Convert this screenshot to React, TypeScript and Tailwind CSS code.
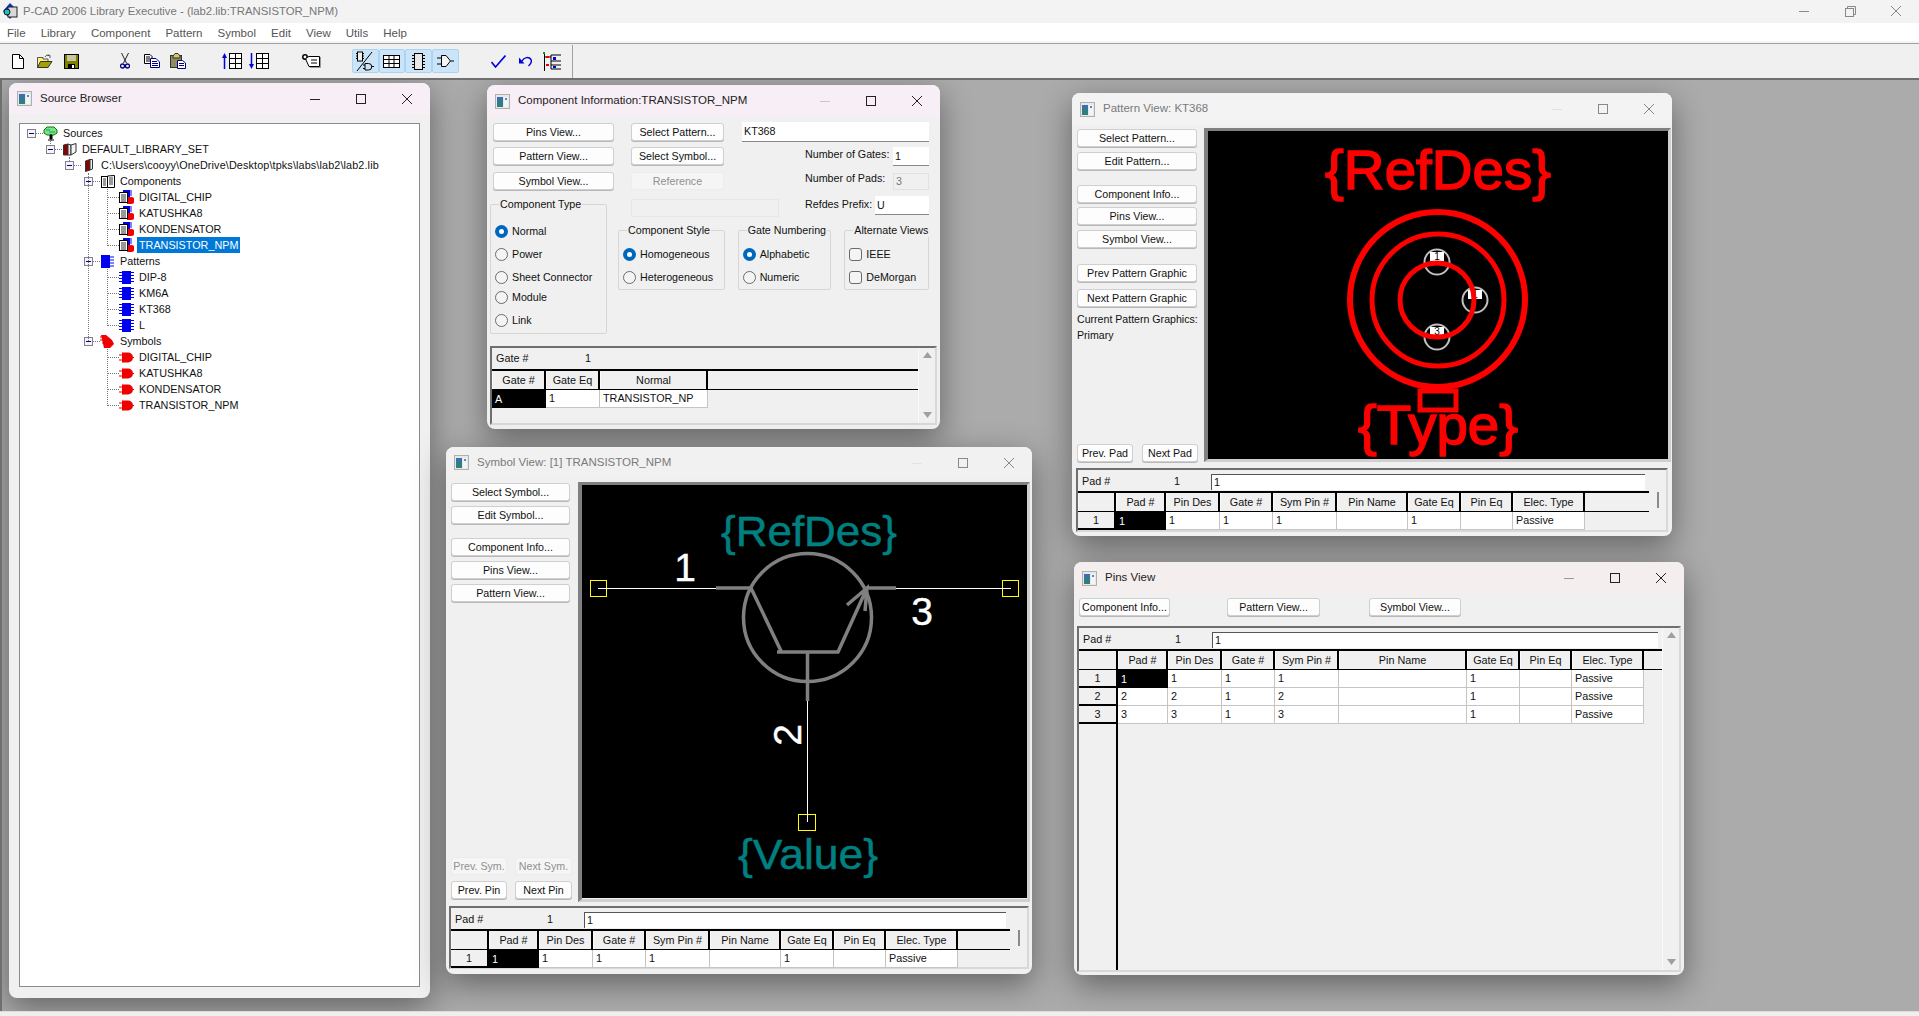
import React from "react";

type Col = { t: string; w: string };

function WinIcon() {
  return (
    <svg width="15" height="15" viewBox="0 0 15 15" className="shrink-0">
      <rect x="0.5" y="0.5" width="14" height="14" fill="#e8e8e8" stroke="#b0b0b0" />
      <rect x="2" y="3" width="6" height="10" fill="#2f7f7f" />
      <rect x="2" y="3" width="6" height="4" fill="#3a6fb0" />
      <rect x="9" y="3" width="4" height="10" fill="#f4f4f4" />
      <rect x="10" y="4" width="2" height="2" fill="#4a90c0" />
    </svg>
  );
}

function WinControls({ color, minColor }: { color: string; minColor: string }) {
  return (
    <div className="flex shrink-0">
      <div className="w-[46px] flex items-center justify-center">
        <svg width="10" height="10" viewBox="0 0 10 10"><path d="M0 5.5H10" stroke={minColor} /></svg>
      </div>
      <div className="w-[46px] flex items-center justify-center">
        <svg width="10" height="10" viewBox="0 0 10 10"><rect x="0.5" y="0.5" width="9" height="9" fill="none" stroke={color} /></svg>
      </div>
      <div className="w-[46px] flex items-center justify-center">
        <svg width="10" height="10" viewBox="0 0 10 10"><path d="M0 0L10 10M10 0L0 10" stroke={color} /></svg>
      </div>
    </div>
  );
}

function Win({ pos, title, bar, text, ctl, min, h, children }: { pos: string; title: string; bar: string; text: string; ctl: string; min: string; h: string; children: React.ReactNode }) {
  return (
    <div className={`absolute ${pos} rounded-[8px] bg-[#f0f0f0] flex flex-col overflow-hidden shadow-[0_10px_32px_rgba(0,0,0,0.42)]`}>
      <div className={`${h} ${bar} shrink-0 flex items-center pl-2`}>
        <WinIcon />
        <div className={`ml-[8px] flex-1 text-[11.5px] ${text}`}>{title}</div>
        <WinControls color={ctl} minColor={min} />
      </div>
      {children}
    </div>
  );
}

function Btn({ children, cls = "w-full", off = false }: { children: React.ReactNode; cls?: string; off?: boolean }) {
  return (
    <div className={`h-[18px] shrink-0 rounded-[3px] flex items-center justify-center text-[10.7px] leading-none ${cls} ${off ? "bg-[#f5f5f5] border border-[#ececec] text-[#909090]" : "bg-[#fdfdfd] border border-[#cfcfcf] text-[#111] shadow-[0_1px_0_#b8b8b8]"}`}>
      {children}
    </div>
  );
}

function Radio({ on, label, cls }: { on?: boolean; label: string; cls: string }) {
  return (
    <div className={`flex items-center h-[16px] text-[10.7px] text-[#111] ${cls}`}>
      {on ? (
        <span className="w-[13px] h-[13px] rounded-full bg-[#0067c0] flex items-center justify-center shrink-0">
          <span className="w-[5px] h-[5px] rounded-full bg-white" />
        </span>
      ) : (
        <span className="w-[13px] h-[13px] rounded-full border border-[#6b6b6b] bg-[#f4f4f4] shrink-0" />
      )}
      <span className="ml-[4px]">{label}</span>
    </div>
  );
}

function Check({ label, cls }: { label: string; cls: string }) {
  return (
    <div className={`flex items-center h-[16px] text-[10.7px] text-[#111] ${cls}`}>
      <span className="w-[13px] h-[13px] rounded-[3px] border border-[#6b6b6b] bg-[#f4f4f4] shrink-0" />
      <span className="ml-[4px]">{label}</span>
    </div>
  );
}

function Group({ label, cls, children }: { label: string; cls: string; children: React.ReactNode }) {
  return (
    <div className={`relative border border-[#d6d6d6] rounded-[2px] ${cls}`}>
      <div className="absolute -top-[8px] left-[8px] bg-[#f0f0f0] px-px text-[10.7px] leading-[14px] text-[#111] whitespace-nowrap">{label}</div>
      {children}
    </div>
  );
}

function Tri({ up }: { up?: boolean }) {
  return (
    <svg width="9" height="7" viewBox="0 0 9 7">
      <path d={up ? "M4.5 0L9 6H0Z" : "M0 0H9L4.5 6Z"} fill="#a0a0a0" />
    </svg>
  );
}

function PadTop() {
  return (
    <div className="h-[21px] pt-[2px] flex items-center text-[10.8px] text-[#111] shrink-0">
      <div className="w-[96px] pl-1">Pad #</div>
      <div className="w-[37px]">1</div>
      <div className="flex-1 mr-[4px] h-[16px] bg-white border-l border-t border-[#555] pl-[2px] flex items-center">1</div>
    </div>
  );
}

function Sheet({ cls, top, cols, rows, rowHead, scroll, extend }: { cls: string; top: React.ReactNode; cols: Col[]; rows: string[][]; rowHead: boolean; scroll: "thumb" | "arrows"; extend?: string }) {
  return (
    <div className={`flex border-2 border-[#6f6f6f] border-r-[#d8d8d8] border-b-[#d8d8d8] bg-[#f0f0f0] text-[10.8px] text-[#111] ${cls}`}>
      <div className="flex-1 min-w-0 flex flex-col">
        {top}
        <div className="flex h-[21px] border-t-2 border-b border-black shrink-0">
          {cols.map((c, i) => (
            <div key={i} className={`${c.w} shrink-0 flex items-center justify-center border-r-2 border-black border-l border-l-[#fafafa]`}>{c.t}</div>
          ))}
          <div className="flex-1" />
        </div>
        {rows.map((r, i) => (
          <div key={i} className="flex h-[18px] shrink-0">
            {r.map((v, j) => {
              const head = rowHead && j === 0;
              const sel = i === 0 && j === (rowHead ? 1 : 0);
              const tone = head
                ? "bg-[#f0f0f0] border-r-2 border-b-2 border-black justify-center"
                : sel
                ? "bg-black text-white pl-[3px]"
                : "bg-white border-r border-b border-[#c4c4c4] pl-[3px]";
              return <div key={j} className={`${cols[j].w} shrink-0 flex items-center ${tone}`}>{v}</div>;
            })}
          </div>
        ))}
        {extend && <div className={`flex-1 ${extend} border-r-2 border-black`} />}
      </div>
      {scroll === "arrows" ? (
        <div className="w-[17px] shrink-0 border-l border-[#fafafa] flex flex-col items-center justify-between py-[4px]">
          <Tri up />
          <Tri />
        </div>
      ) : (
        <div className="w-[17px] shrink-0 flex items-center justify-center">
          <div className="w-[2px] h-[16px] bg-[#8a8a8a]" />
        </div>
      )}
    </div>
  );
}

const padCols: Col[] = [
  { t: "", w: "w-[38px]" },
  { t: "Pad #", w: "w-[50px]" },
  { t: "Pin Des", w: "w-[54px]" },
  { t: "Gate #", w: "w-[53px]" },
  { t: "Sym Pin #", w: "w-[64px]" },
  { t: "Pin Name", w: "w-[71px]" },
  { t: "Gate Eq", w: "w-[53px]" },
  { t: "Pin Eq", w: "w-[52px]" },
  { t: "Elec. Type", w: "w-[72px]" },
];
const pinCols: Col[] = padCols.map((c) =>
  c.t === "Pin Name" ? { t: c.t, w: "w-[128px]" } : c.t === "" ? { t: c.t, w: "w-[39px]" } : c
);
const gateCols: Col[] = [
  { t: "Gate #", w: "w-[54px]" },
  { t: "Gate Eq", w: "w-[54px]" },
  { t: "Normal", w: "w-[108px]" },
];

/* tree icons */
function CompIcon() {
  return (
    <svg width="15" height="15" viewBox="0 0 15 15" className="shrink-0">
      <path d="M4 0H11V9H4Z" fill="#0000e0" />
      <path d="M11 1H13M11 3H13M11 5H13" stroke="#0000e0" />
      <path d="M8 7H12A3.5 3.5 0 0 1 12 14H8Z" fill="#f00000" />
      <rect x="0.5" y="2.5" width="8" height="10" fill="#fff" stroke="#000" />
      <path d="M2 5H7M2 7H7M2 9H7M2 11H7" stroke="#333" />
    </svg>
  );
}
function PatIcon({ big }: { big?: boolean }) {
  return (
    <svg width="15" height="15" viewBox="0 0 15 15" className="shrink-0">
      <rect x={big ? 1 : 3} y="1" width="9" height="13" fill="#0000f0" />
      <path d={big ? "M10 3H14M10 6H14M10 9H14M10 12H14" : "M0 2.5H15M0 5.5H15M0 8.5H15M0 11.5H15"} stroke="#0000f0" />
    </svg>
  );
}
function SymIcon({ big }: { big?: boolean }) {
  return (
    <svg width="15" height="15" viewBox="0 0 15 15" className="shrink-0">
      {big ? (
        <>
          <path d="M1 1H6L12 6L14 10L10 14H4Z" fill="#f00000" />
          <path d="M0 3H3M0 6H4M2 9H5" stroke="#f00000" />
        </>
      ) : (
        <>
          <path d="M3 2.5H9A5 5 0 0 1 9 12.5H3Z" fill="#f00000" />
          <path d="M0 5H4M0 10H4M13 7.5H15" stroke="#f00000" />
        </>
      )}
    </svg>
  );
}
function SrcIcon() {
  return (
    <svg width="15" height="15" viewBox="0 0 15 15" className="shrink-0">
      <path d="M1 4L4 1H11L14 4V7L11 9H4L1 7Z" fill="#7fe07f" stroke="#008000" />
      <path d="M3 4H7M6 6H12" stroke="#00a0a0" />
      <path d="M7 9H9V13H7ZM5 14H11" fill="#000" stroke="#000" />
    </svg>
  );
}
function SetIcon() {
  return (
    <svg width="14" height="13" viewBox="0 0 14 13" className="shrink-0">
      <path d="M0.5 2L5 1V12L0.5 12Z" fill="#8b0000" stroke="#333" />
      <path d="M5 1L8 2V12L5 12Z" fill="#e8e8e8" stroke="#333" />
      <path d="M8 2L13 0.5V9L8 12Z" fill="#f4f4f4" stroke="#333" />
    </svg>
  );
}
function LibIcon() {
  return (
    <svg width="8" height="13" viewBox="0 0 8 13" className="shrink-0">
      <path d="M0.5 2L5 0.5V11L0.5 12.5Z" fill="#8b0000" stroke="#333" />
      <path d="M5 0.5H7.5V10L5 11Z" fill="#eee" stroke="#333" />
    </svg>
  );
}
function BooksIcon() {
  return (
    <svg width="14" height="13" viewBox="0 0 14 13" className="shrink-0">
      <rect x="0.5" y="1.5" width="6" height="11" fill="#fff" stroke="#000" />
      <path d="M6.5 1L13.5 0.5V12.5H6.5Z" fill="#fff" stroke="#000" />
      <path d="M2 4H5M2 6H5M2 8H5M2 10H5M8 3H12M8 5H12M8 7H12M8 9H12" stroke="#333" />
    </svg>
  );
}

const lvl = ["pl-[7px]", "pl-[26px]", "pl-[45px]", "pl-[64px]", "pl-[83px]"];

function Row({ l, icon, text, selected, exp = true, cls = "" }: { l: number; icon: React.ReactNode; text: string; selected?: boolean; exp?: boolean; cls?: string }) {
  return (
    <div className={`h-4 flex items-center text-[10.8px] leading-none text-[#111] ${lvl[l]}`}>
      {exp ? (
        <span className="w-[9px] h-[9px] shrink-0 border border-[#808090] bg-[#f4f4f4] flex items-center justify-center">
          <span className="w-[5px] h-px bg-[#000080]" />
        </span>
      ) : (
        <span className="w-[5px] shrink-0" />
      )}
      <span className={`${exp ? "w-[7px]" : "w-[11px]"} shrink-0 border-t border-dotted border-[#777]`} />
      <span className="w-[15px] shrink-0 flex items-center justify-center">{icon}</span>
      <span className={selected ? "ml-[3px] pl-[2px] pr-[2px] h-4 flex items-center bg-[#0078d7] text-white" : `ml-[5px] whitespace-nowrap ${cls}`}>{text}</span>
    </div>
  );
}

function VLine({ cls }: { cls: string }) {
  return <div className={`absolute w-0 border-l border-dotted border-[#777] ${cls}`} />;
}

/* toolbar icons */
const Slot = ({ children, on }: { children: React.ReactNode; on?: boolean }) => (
  <div className={`w-[26.7px] h-[24px] shrink-0 flex items-center justify-center rounded-[2px] ${on ? "bg-[#cce4f7] border border-[#a8d4f5]" : ""}`}>{children}</div>
);
const Gap = () => <div className="w-[26.7px] shrink-0" />;

function Grid3({ x = 0 }: { x?: number }) {
  return (
    <g transform={`translate(${x} 0)`} fill="none" stroke="#000">
      <rect x="0.5" y="0.5" width="12" height="15" fill="#fff" />
      <path d="M6.5 0V16M0 5.5H13M0 10.5H13" />
    </g>
  );
}

function Toolbar() {
  return (
    <div className="h-[34px] bg-[#f0f0f0] flex items-center pl-[5px] shrink-0">
      <Slot>
        <svg width="12" height="15" viewBox="0 0 12 15"><path d="M0.5 0.5H7.5L11.5 4.5V14.5H0.5Z" fill="#fff" stroke="#000" /><path d="M7.5 .5V4.5H11.5" fill="none" stroke="#000" /></svg>
      </Slot>
      <Slot>
        <svg width="16" height="14" viewBox="0 0 16 14"><path d="M0.5 3.5H6V5H11V13.5H0.5Z" fill="#fff27a" stroke="#555" /><path d="M0.5 13.5L3.5 7.5H15L11 13.5Z" fill="#a8a000" stroke="#333" /><path d="M8 3C9 1 11 0.5 13 1.5M13 1.5V4M13 1.5H10.5" fill="none" stroke="#555" /></svg>
      </Slot>
      <Slot>
        <svg width="15" height="15" viewBox="0 0 15 15"><rect x="0.5" y="0.5" width="14" height="14" fill="#808000" stroke="#000" /><rect x="3" y="1" width="9" height="6" fill="#c8c8a0" /><rect x="4" y="10" width="7" height="5" fill="#000" /><rect x="8" y="11" width="2" height="3" fill="#fff" /></svg>
      </Slot>
      <Gap />
      <Slot>
        <svg width="10" height="16" viewBox="0 0 10 16"><path d="M1.5 0L6.5 10M8.5 0L3.5 10" stroke="#222" fill="none" /><circle cx="2.5" cy="13" r="2" fill="none" stroke="#000080" strokeWidth="1.3" /><circle cx="7.5" cy="13" r="2" fill="none" stroke="#000080" strokeWidth="1.3" /></svg>
      </Slot>
      <Slot>
        <svg width="16" height="14" viewBox="0 0 16 14"><path d="M0.5 0.5H6L8 2.5V9.5H0.5Z" fill="#fff" stroke="#000" /><path d="M2 3H6M2 5H6M2 7H6" stroke="#000" /><path d="M6.5 4.5H12L15.5 8V13.5H6.5Z" fill="#fff" stroke="#000080" /><path d="M8 7.5H13M8 9.5H14M8 11.5H14" stroke="#000080" /></svg>
      </Slot>
      <Slot>
        <svg width="16" height="16" viewBox="0 0 16 16"><rect x="0.5" y="2.5" width="11" height="12" fill="#8f8a60" stroke="#333" /><path d="M3 3L5 .5H8L10 3V5H3Z" fill="#d8c860" stroke="#333" /><path d="M7.5 7.5H12.5L15.5 10V15.5H7.5Z" fill="#fff" stroke="#000080" /><path d="M9 10.5H14M9 12.5H14" stroke="#000080" /></svg>
      </Slot>
      <Gap />
      <Slot>
        <svg width="20" height="16" viewBox="0 0 20 16"><path d="M2.5 16V3" stroke="#0000e0" strokeWidth="1.5" /><path d="M2.5 0L5 5H0Z" fill="#0000e0" /><Grid3 x={7} /></svg>
      </Slot>
      <Slot>
        <svg width="20" height="16" viewBox="0 0 20 16"><path d="M2.5 0V13" stroke="#0000e0" strokeWidth="1.5" /><path d="M2.5 16L5 11H0Z" fill="#0000e0" /><Grid3 x={7} /></svg>
      </Slot>
      <Gap />
      <Slot>
        <svg width="19" height="14" viewBox="0 0 19 14"><circle cx="3" cy="3" r="2.2" fill="#fff" stroke="#000" strokeWidth="1.5" /><path d="M4 4L7 2.5H17.5V12.5H7L4 6Z" fill="#fff" stroke="#000" /><path d="M9 6H15M9 9H15" stroke="#000" /><path d="M18.5 3V13.5H8" fill="none" stroke="#999" /></svg>
      </Slot>
      <Gap />
      <Slot on>
        <svg width="19" height="21" viewBox="0 0 19 21"><rect x="1.5" y="1" width="5" height="9" fill="#eee" stroke="#000" /><path d="M0 2.5H1.5M0 5H1.5M0 7.5H1.5M6.5 2.5H8M6.5 5H8M6.5 7.5H8" stroke="#000" /><path d="M1 20L16 1" stroke="#000" /><path d="M9 12.5H12.5A3 3 0 0 1 12.5 19H9ZM7 14H9M7 17.5H9M15.5 15.5H18" fill="none" stroke="#000" /></svg>
      </Slot>
      <Slot on>
        <svg width="17" height="13" viewBox="0 0 17 13"><rect x="0.5" y="0.5" width="16" height="12" fill="#fff" stroke="#000" /><path d="M6 0V13M11 0V13M0 4.5H17M0 8.5H17" stroke="#000" /></svg>
      </Slot>
      <Slot on>
        <svg width="13" height="17" viewBox="0 0 13 17"><rect x="2.5" y="0.5" width="8" height="16" fill="#e8e8e8" stroke="#000" /><path d="M0 2.5H3M0 5.5H3M0 8.5H3M0 11.5H3M0 14.5H3M10 2.5H13M10 5.5H13M10 8.5H13M10 11.5H13M10 14.5H13" stroke="#000" /></svg>
      </Slot>
      <Slot on>
        <svg width="17" height="12" viewBox="0 0 17 12"><path d="M4.5 .5H9L13.5 6L9 11.5H4.5Z" fill="#f4f4f4" stroke="#000" /><path d="M0 3H4.5M0 9H4.5M13.5 6H17" stroke="#000" /></svg>
      </Slot>
      <Gap />
      <Slot>
        <svg width="15" height="13" viewBox="0 0 15 13"><path d="M0.5 7L4.5 12L14.5 0.5" fill="none" stroke="#0000e0" strokeWidth="1.6" /></svg>
      </Slot>
      <Slot>
        <svg width="13" height="11" viewBox="0 0 13 11"><path d="M3 5C5 1 10 .5 12 3.5C13 6 12 8 9.5 10" fill="none" stroke="#0000e0" strokeWidth="1.4" /><path d="M0 1.5L5.5 7.5H0Z" fill="#0000e0" /></svg>
      </Slot>
      <Slot>
        <svg width="18" height="19" viewBox="0 0 18 19"><path d="M1.5 0V19" stroke="#000" /><path d="M1.5 5H8M8 3V17M8 3H18M8 9H18M8 13H18M8 17H18" fill="none" stroke="#000" /><rect x="0" y="0" width="2" height="2" fill="#00a000" /><rect x="3" y="4" width="3" height="2" fill="#f00000" /><rect x="3" y="12" width="3" height="2" fill="#f00000" /><rect x="10" y="5" width="3" height="3" fill="#0000e0" /><rect x="10" y="14" width="3" height="2" fill="#0000e0" /></svg>
      </Slot>
      <div className="ml-[7px] h-[33px] w-px bg-[#a0a0a0]" />
    </div>
  );
}

const redText = { fill: "#ff0000", stroke: "#ff0000", strokeWidth: 1.6 };
const tealText = { fill: "#008080", stroke: "#008080", strokeWidth: 0.5 };
const whiteText = { fill: "#ffffff", stroke: "#ffffff", strokeWidth: 0.4 };

function PatternCanvas() {
  const pad = (cx: number, cy: number, n: string) => (
    <g key={n + cx}>
      <circle cx={cx} cy={cy} r="12.5" fill="none" stroke="#c0c0c0" strokeWidth="2" />
      <rect x={cx - 7} y={cy - 10} width="14" height="9" fill="#fff" />
      <text x={cx} y={cy - 2} fontSize="10" textAnchor="middle" fill="#000">{n}</text>
    </g>
  );
  return (
    <svg viewBox="1208 132 460 328" className="block w-[460px] h-[328px] bg-black">
      {pad(1437, 263, "1")}
      {pad(1475, 301, "1")}
      {pad(1437, 338, "3")}
      <g fill="none" stroke="#ff0000">
        <circle cx="1437.5" cy="300.5" r="87.5" strokeWidth="6" />
        <circle cx="1438" cy="301" r="66" strokeWidth="5" />
        <circle cx="1437" cy="301" r="37" strokeWidth="5" />
        <rect x="1420" y="392" width="36" height="19" strokeWidth="5" />
      </g>
      <text x="1438" y="190" fontSize="56" textAnchor="middle" textLength="226" lengthAdjust="spacingAndGlyphs" {...redText}>{"{RefDes}"}</text>
      <text x="1438" y="445" fontSize="56" textAnchor="middle" textLength="160" lengthAdjust="spacingAndGlyphs" {...redText}>{"{Type}"}</text>
    </svg>
  );
}

function SymbolCanvas() {
  return (
    <svg viewBox="582 486 445 413" className="block w-[445px] h-[413px] bg-black">
      <g fill="none" stroke="#ffff00">
        <rect x="590.5" y="581.5" width="16" height="16" />
        <rect x="1002.5" y="581.5" width="16" height="16" />
        <rect x="798.5" y="815.5" width="17" height="16" />
      </g>
      <path d="M598 589.5H716M896 589.5H1011M807.5 702V823" stroke="#fff" fill="none" />
      <g fill="none" stroke="#808080" strokeWidth="3.5">
        <circle cx="807.5" cy="618.5" r="64" />
        <path d="M716 589H751L781.5 653M777 653H838L867 589H896M847 606L867 589L865 612M807.5 653V702" />
      </g>
      <text x="685" y="582" fontSize="39" textAnchor="middle" {...whiteText}>1</text>
      <text x="922" y="626" fontSize="39" textAnchor="middle" {...whiteText}>3</text>
      <text transform="translate(801 736) rotate(-90)" fontSize="39" textAnchor="middle" {...whiteText}>2</text>
      <text x="809" y="547" fontSize="42" textAnchor="middle" textLength="176" lengthAdjust="spacingAndGlyphs" {...tealText}>{"{RefDes}"}</text>
      <text x="808" y="870" fontSize="42" textAnchor="middle" textLength="140" lengthAdjust="spacingAndGlyphs" {...tealText}>{"{Value}"}</text>
    </svg>
  );
}

export default function App() {
  return (
    <div className="w-[1919px] h-[1016px] flex flex-col overflow-hidden bg-[#f0f0f0] font-['Liberation_Sans',sans-serif]">
      {/* app title */}
      <div className="h-[23px] bg-[#f3f3f3] flex items-center shrink-0 pl-[2px]">
        <svg width="17" height="17" viewBox="0 0 17 17" className="shrink-0">
          <path d="M8 0L15 7L8 16L1 8Z" fill="#1030c0" />
          <rect x="6" y="4" width="9" height="10" fill="#d8d8d8" stroke="#222" />
          <circle cx="5" cy="9" r="3" fill="#20c0c0" stroke="#111" />
        </svg>
        <div className="ml-[4px] flex-1 text-[11.35px] text-[#777]">P-CAD 2006 Library Executive - (lab2.lib:TRANSISTOR_NPM)</div>
        <div className="flex">
          <div className="w-[46px] flex justify-center"><svg width="10" height="10" viewBox="0 0 10 10"><path d="M0 5.5H10" stroke="#888" /></svg></div>
          <div className="w-[46px] flex justify-center"><svg width="11" height="11" viewBox="0 0 11 11"><rect x="0.5" y="2.5" width="8" height="8" fill="none" stroke="#888" /><path d="M2.5 2.5V0.5H10.5V8.5H8.5" fill="none" stroke="#888" /></svg></div>
          <div className="w-[46px] flex justify-center"><svg width="10" height="10" viewBox="0 0 10 10"><path d="M0 0L10 10M10 0L0 10" stroke="#888" /></svg></div>
        </div>
      </div>
      {/* menu */}
      <div className="h-[20px] pt-[3px] bg-white flex items-center gap-[15.1px] pl-[7px] text-[11.5px] text-[#555] shrink-0 border-b-2 border-[#f5f5f5]">
        {["File", "Library", "Component", "Pattern", "Symbol", "Edit", "View", "Utils", "Help"].map((m) => (
          <span key={m}>{m}</span>
        ))}
      </div>
      <div className="h-px bg-[#a0a0a0] shrink-0" />
      <Toolbar />
      {/* MDI area */}
      <div className="relative flex-1 bg-[#ababab] border-t-2 border-[#6f6f6f] border-l-2 border-l-[#6f6f6f] overflow-hidden">
        {/* Source Browser */}
        <Win pos="left-[7px] top-[3px] w-[421px] h-[915px]" title="Source Browser" bar="bg-[#f8eef6]" text="text-[#222]" ctl="#222" min="#222" h="h-[31px]">
          <div className="relative mx-[10px] mt-[9px] h-[864px] border border-[#8a8a90] bg-white pt-px">
            <VLine cls="left-[30px] top-[17px] h-[5px]" />
            <VLine cls="left-[49px] top-[33px] h-[4px]" />
            <VLine cls="left-[68px] top-[49px] h-[168px]" />
            <VLine cls="left-[87px] top-[65px] h-[57px]" />
            <VLine cls="left-[87px] top-[145px] h-[57px]" />
            <VLine cls="left-[87px] top-[225px] h-[57px]" />
            <Row l={0} icon={<SrcIcon />} text="Sources" />
            <Row l={1} icon={<SetIcon />} text="DEFAULT_LIBRARY_SET" />
            <Row l={2} icon={<LibIcon />} text="C:\Users\cooyy\OneDrive\Desktop\tpks\labs\lab2\lab2.lib" cls="tracking-[0.13px]" />
            <Row l={3} icon={<BooksIcon />} text="Components" />
            <Row l={4} exp={false} icon={<CompIcon />} text="DIGITAL_CHIP" />
            <Row l={4} exp={false} icon={<CompIcon />} text="KATUSHKA8" />
            <Row l={4} exp={false} icon={<CompIcon />} text="KONDENSATOR" />
            <Row l={4} exp={false} icon={<CompIcon />} text="TRANSISTOR_NPM" selected />
            <Row l={3} icon={<PatIcon big />} text="Patterns" />
            <Row l={4} exp={false} icon={<PatIcon />} text="DIP-8" />
            <Row l={4} exp={false} icon={<PatIcon />} text="KM6A" />
            <Row l={4} exp={false} icon={<PatIcon />} text="KT368" />
            <Row l={4} exp={false} icon={<PatIcon />} text="L" />
            <Row l={3} icon={<SymIcon big />} text="Symbols" />
            <Row l={4} exp={false} icon={<SymIcon />} text="DIGITAL_CHIP" />
            <Row l={4} exp={false} icon={<SymIcon />} text="KATUSHKA8" />
            <Row l={4} exp={false} icon={<SymIcon />} text="KONDENSATOR" />
            <Row l={4} exp={false} icon={<SymIcon />} text="TRANSISTOR_NPM" />
          </div>
        </Win>

        {/* Component Information */}
        <Win pos="left-[485px] top-[5px] w-[453px] h-[344px]" title="Component Information:TRANSISTOR_NPM" bar="bg-[#f8eef6]" text="text-[#222]" ctl="#222" min="#c8c8c8" h="h-[32px]">
          <div className="flex-1 flex pl-[3px] pt-[6px] min-h-0">
            <div className="w-[128px] shrink-0 flex flex-col">
              <Btn cls="ml-[3px] w-[121px]">Pins View...</Btn>
              <Btn cls="ml-[3px] mt-[6px] w-[121px]">Pattern View...</Btn>
              <Btn cls="ml-[3px] mt-[7px] w-[121px]">Symbol View...</Btn>
              <Group label="Component Type" cls="mt-[14px] w-[117px] h-[130px] pl-[4px]">
                <Radio on label="Normal" cls="mt-[18px]" />
                <Radio label="Power" cls="mt-[7px]" />
                <Radio label="Sheet Connector" cls="mt-[7px]" />
                <Radio label="Module" cls="mt-[4px]" />
                <Radio label="Link" cls="mt-[7px]" />
              </Group>
            </div>
            <div className="w-[311px] shrink-0 flex flex-col">
              <div className="flex h-[107px]">
                <div className="ml-[13px] w-[111px] shrink-0 flex flex-col">
                  <Btn cls="w-[93px]">Select Pattern...</Btn>
                  <Btn cls="mt-[6px] w-[93px]">Select Symbol...</Btn>
                  <Btn cls="mt-[7px] w-[93px]" off>Reference</Btn>
                  <div className="mt-[9px] h-[18px] w-[148px] border border-[#e6e6e6]" />
                </div>
                <div className="w-[187px] shrink-0 flex flex-col -mt-px text-[10.7px] text-[#111]">
                  <div className="h-[20px] bg-white border-b border-[#888] pl-[2px] flex items-center">KT368</div>
                  <div className="mt-[5px] h-[19px] flex items-center pl-[63px]">
                    <span className="w-[88px] whitespace-nowrap -translate-y-[2px]">Number of Gates:</span>
                    <span className="w-[36px] h-[19px] bg-white border-b border-[#888] pl-[2px] flex items-center">1</span>
                  </div>
                  <div className="mt-[7px] h-[17px] flex items-center pl-[63px]">
                    <span className="w-[88px] whitespace-nowrap -translate-y-[3px]">Number of Pads:</span>
                    <span className="w-[36px] h-[17px] bg-[#f0f0f0] border border-[#e2e2e2] pl-[2px] flex items-center text-[#777]">3</span>
                  </div>
                  <div className="mt-[6px] h-[19px] flex items-center pl-[63px]">
                    <span className="w-[70px] whitespace-nowrap -translate-y-px">Refdes Prefix:</span>
                    <span className="w-[54px] h-[19px] bg-white border-b border-[#888] pl-[2px] flex items-center">U</span>
                  </div>
                </div>
              </div>
              <div className="flex gap-[13px]">
                <Group label="Component Style" cls="w-[107px] h-[60px] pl-[4px]">
                  <Radio on label="Homogeneous" cls="mt-[15px]" />
                  <Radio label="Heterogeneous" cls="mt-[7px]" />
                </Group>
                <Group label="Gate Numbering" cls="w-[94px] h-[60px] pl-[4px]">
                  <Radio on label="Alphabetic" cls="mt-[15px]" />
                  <Radio label="Numeric" cls="mt-[7px]" />
                </Group>
                <Group label="Alternate Views" cls="w-[85px] h-[60px] pl-[4px]">
                  <Check label="IEEE" cls="mt-[15px]" />
                  <Check label="DeMorgan" cls="mt-[7px]" />
                </Group>
              </div>
            </div>
          </div>
          <Sheet
            cls="mx-[3px] mb-[4px] h-[79px] shrink-0"
            rowHead={false}
            scroll="arrows"
            cols={gateCols}
            rows={[["A", "1", "TRANSISTOR_NP"]]}
            top={
              <div className="h-[21px] flex items-center shrink-0">
                <div className="w-[93px] pl-[4px]">Gate #</div>
                <div>1</div>
              </div>
            }
          />
        </Win>

        {/* Pattern View */}
        <Win pos="left-[1070px] top-[13px] w-[600px] h-[443px]" title="Pattern View: KT368" bar="bg-[#f3f3f3]" text="text-[#7a7a7a]" ctl="#888" min="#e2e2e2" h="h-[32px]">
          <div className="flex pl-[5px] pt-[3px] h-[340px] shrink-0">
            <div className="w-[127px] shrink-0 flex flex-col h-[336px] text-[10.6px] text-[#111]">
              <Btn cls="mt-[1px] w-[120px]">Select Pattern...</Btn>
              <Btn cls="mt-[5px] w-[120px]">Edit Pattern...</Btn>
              <Btn cls="mt-[15px] w-[120px]">Component Info...</Btn>
              <Btn cls="mt-[4px] w-[120px]">Pins View...</Btn>
              <Btn cls="mt-[5px] w-[120px]">Symbol View...</Btn>
              <Btn cls="mt-[16px] w-[120px]">Prev Pattern Graphic</Btn>
              <Btn cls="mt-[7px] w-[120px]">Next Pattern Graphic</Btn>
              <div className="mt-[4px] leading-[16px] whitespace-nowrap">Current Pattern Graphics:</div>
              <div className="leading-[16px]">Primary</div>
              <div className="mt-auto flex mb-[2px]">
                <Btn cls="w-[56px]">Prev. Pad</Btn>
                <Btn cls="ml-[9px] w-[56px]">Next Pad</Btn>
              </div>
            </div>
            <div className="h-[334px] border-[3px] border-l-[4px] border-[#808080] border-r-[#d0d0d0] border-b-[#d0d0d0]">
              <PatternCanvas />
            </div>
          </div>
          <Sheet cls="mx-[4px] mt-[3px] h-[64px] shrink-0" rowHead scroll="thumb" cols={padCols} rows={[["1", "1", "1", "1", "1", "", "1", "", "Passive"]]} top={<PadTop />} />
        </Win>

        {/* Symbol View */}
        <Win pos="left-[444px] top-[367px] w-[586px] h-[527px]" title="Symbol View: [1] TRANSISTOR_NPM" bar="bg-[#f1f1f1]" text="text-[#7a7a7a]" ctl="#888" min="#e2e2e2" h="h-[31px]">
          <div className="flex pl-[5px] pt-[4px] h-[424px] shrink-0">
            <div className="w-[127px] shrink-0 flex flex-col h-[420px]">
              <Btn cls="mt-[1px] w-[119px]">Select Symbol...</Btn>
              <Btn cls="mt-[5px] w-[119px]">Edit Symbol...</Btn>
              <Btn cls="mt-[14px] w-[119px]">Component Info...</Btn>
              <Btn cls="mt-[5px] w-[119px]">Pins View...</Btn>
              <Btn cls="mt-[5px] w-[119px]">Pattern View...</Btn>
              <div className="mt-auto flex">
                <Btn cls="w-[56px]" off>Prev. Sym.</Btn>
                <Btn cls="ml-[8px] w-[57px]" off>Next Sym.</Btn>
              </div>
              <div className="mt-[6px] mb-[3px] flex">
                <Btn cls="w-[56px]">Prev. Pin</Btn>
                <Btn cls="ml-[8px] w-[57px]">Next Pin</Btn>
              </div>
            </div>
            <div className="h-[420px] border-[3px] border-l-[4px] border-[#808080] border-r-[#d0d0d0] border-b-[#d0d0d0]">
              <SymbolCanvas />
            </div>
          </div>
          <Sheet cls="mx-[3px] mt-[4px] h-[63px] shrink-0" rowHead scroll="thumb" cols={padCols} rows={[["1", "1", "1", "1", "1", "", "1", "", "Passive"]]} top={<PadTop />} />
        </Win>

        {/* Pins View */}
        <Win pos="left-[1072px] top-[482px] w-[610px] h-[413px]" title="Pins View" bar="bg-[#f5eeee]" text="text-[#222]" ctl="#222" min="#999" h="h-[32px]">
          <div className="flex pl-[5px] mt-[4px] shrink-0">
            <Btn cls="w-[91px]">Component Info...</Btn>
            <Btn cls="ml-[57px] w-[93px]">Pattern View...</Btn>
            <Btn cls="ml-[49px] w-[92px]">Symbol View...</Btn>
          </div>
          <Sheet
            cls="mx-[3px] mt-[10px] h-[346px] shrink-0"
            rowHead
            extend="w-[39px]"
            scroll="arrows"
            cols={pinCols}
            rows={[
              ["1", "1", "1", "1", "1", "", "1", "", "Passive"],
              ["2", "2", "2", "1", "2", "", "1", "", "Passive"],
              ["3", "3", "3", "1", "3", "", "1", "", "Passive"],
            ]}
            top={<PadTop />}
          />
        </Win>
      </div>
      <div className="h-[5px] shrink-0 bg-[#efefef] border-t border-[#dcdcdc]" />
    </div>
  );
}
